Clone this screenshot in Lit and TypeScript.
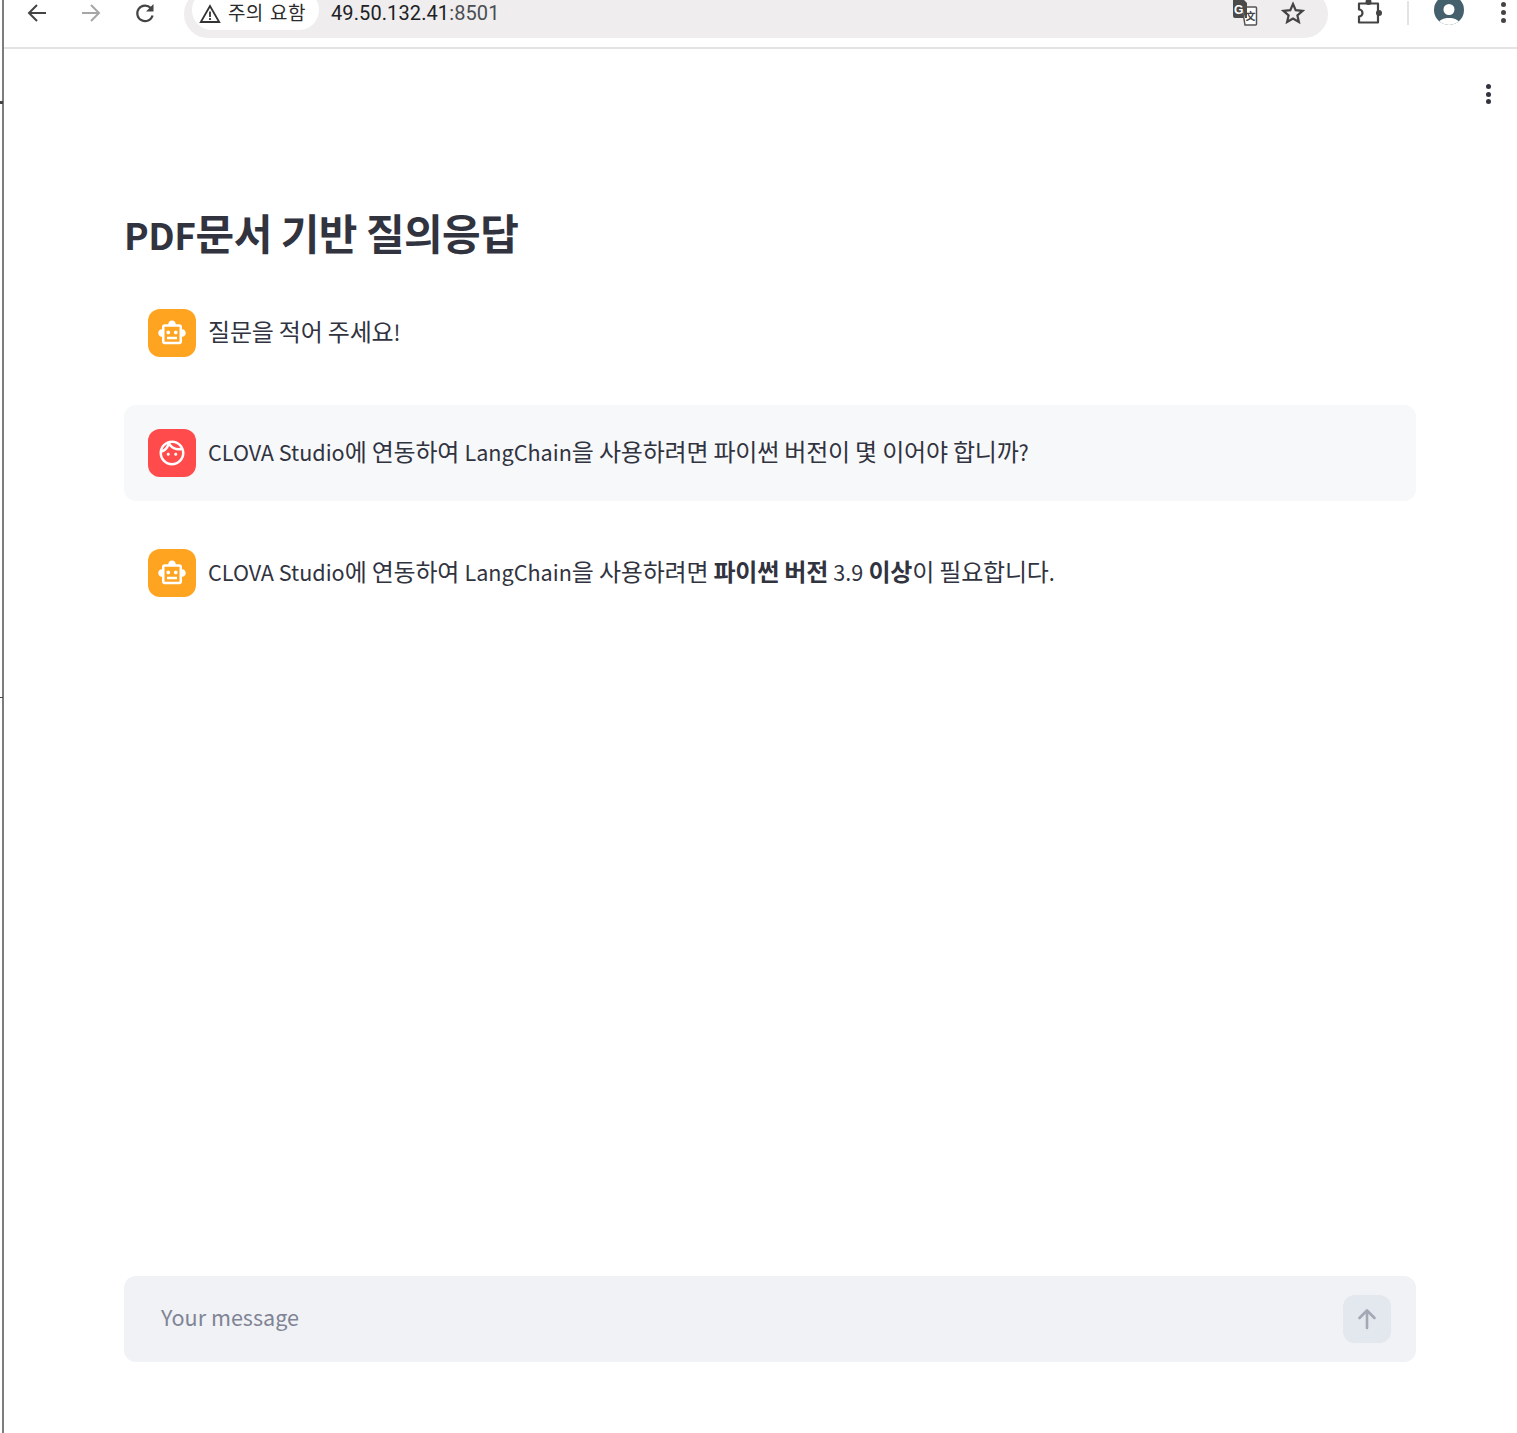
import { LitElement, html, css } from "lit";
import { customElement } from "lit/decorators.js";

const botPath = "M20 9V7c0-1.1-.9-2-2-2h-3c0-1.66-1.34-3-3-3S9 3.34 9 5H6c-1.1 0-2 .9-2 2v2c-1.66 0-3 1.34-3 3s1.34 3 3 3v4c0 1.1.9 2 2 2h12c1.1 0 2-.9 2-2v-4c1.66 0 3-1.34 3-3s-1.34-3-3-3zm-2 10H6V7h12v12zm-9-6c-.83 0-1.5-.67-1.5-1.5S8.17 10 9 10s1.5.67 1.5 1.5S9.83 13 9 13zm7.5-1.5c0 .83-.67 1.5-1.5 1.5s-1.5-.67-1.5-1.5.67-1.5 1.5-1.5 1.5.67 1.5 1.5zM8 15h8v2H8v-2z";
const facePath = "M10.25 13c0 .69-.56 1.25-1.25 1.25S7.75 13.69 7.75 13s.56-1.25 1.25-1.25 1.25.56 1.25 1.25zM15 11.75c-.69 0-1.25.56-1.25 1.25s.56 1.25 1.25 1.25 1.25-.56 1.25-1.25-.56-1.25-1.25-1.25zm7 .25c0 5.52-4.48 10-10 10S2 17.52 2 12 6.48 2 12 2s10 4.48 10 10zM10.66 4.12C12.06 6.44 14.6 8 17.5 8c.46 0 .91-.05 1.34-.12C17.44 5.56 14.9 4 12 4c-.46 0-.91.05-1.34.12zM4.42 9.47c1.71-.97 3.03-2.55 3.66-4.44C6.37 6 5.05 7.58 4.42 9.47zM20 12c0-.78-.12-1.53-.33-2.24-.7.15-1.42.24-2.17.24-3.13 0-5.92-1.44-7.76-3.69C8.69 8.87 6.6 10.85 4 11.86c.01.04 0 .09 0 .14 0 4.41 3.59 8 8 8s8-3.59 8-8z";

const icon = (d: string) => html`<svg class="av-icon" viewBox="0 0 24 24" fill="#fff"><path d=${d}></path></svg>`;

/* Latin runs are set smaller: the CJK family's Latin glyphs are larger than the reference's. */
const mixed = (text: string) =>
  text.split(/([A-Za-z0-9.!?]+(?: [A-Za-z0-9.!?]+)*)/).map((part, i) =>
    i % 2 ? html`<span class="l">${part}</span>` : part
  );

@customElement("app-root")
export class AppRoot extends LitElement {
  static styles = css`
    :host { display: block; height: 1433px; background: #fff; overflow: hidden; position: relative;
      font-family: "Noto Sans CJK KR", "Noto Sans", sans-serif; color: #31333f; }
    .frame { height: 1433px; margin-left: 2px; border-left: 2px solid #7d7d7d; display: flex; flex-direction: column; box-sizing: border-box; }
    .tick { position: absolute; left: 0; width: 3px; height: 3px; background: #444; }
    .toolbar { height: 49px; flex: none; box-sizing: border-box; border-bottom: 2px solid #e3e3e3; display: flex; align-items: flex-start; overflow: hidden; padding-left: 6px; }
    .nav { width: 54px; height: 26px; display: flex; align-items: center; justify-content: center; flex: none; }
    .pill { width: 1144px; height: 48px; margin: -10px 0 0 12px; border-radius: 24px; background: #efedee; display: flex; align-items: center; flex: none; padding-left: 8px; box-sizing: border-box; position: relative; }
    .badge { width: 127px; height: 40px; border-radius: 20px; background: #fff; display: flex; align-items: center; padding-left: 7px; box-sizing: border-box; gap: 7px; margin-top: -8px; flex: none; }
    .badge svg { position: relative; top: 4px; flex: none; }
    .badge span { font: 19px/1 "Noto Sans CJK KR", sans-serif; color: #2b2b2b; letter-spacing: .3px; word-spacing: 2px; position: relative; top: 1px; white-space: nowrap; }
    .url { font: 20px/1 Roboto, sans-serif; color: #202124; margin-left: 12px; position: relative; top: -1px; letter-spacing: .1px; }
    .url i { font-style: normal; color: #4a4d51; }
    .pill-end { margin-left: auto; display: flex; align-items: center; gap: 23px; padding-right: 23px; position: relative; top: -1px; }
    .ext { margin-left: 27px; width: 28px; height: 28px; flex: none; }
    .divider { width: 2px; height: 24px; background: #e3e3e3; margin: 1px 0 0 24px; flex: none; }
    .avatar { margin: 0 0 0 24px; width: 32px; height: 30px; flex: none; }
    .dots { margin: 2px 0 0 35px; width: 6px; height: 21px; flex: none; display: flex; flex-direction: column; justify-content: space-between; align-items: center; }
    .dots b { width: 5px; height: 5px; border-radius: 50%; background: #444; display: block; }

    .page { flex: 1; display: flex; flex-direction: column; position: relative; padding: 0 101px 0 120px; min-height: 0; }
    .menu { position: absolute; top: 35px; right: 26px; width: 6px; height: 20px; display: flex; flex-direction: column; justify-content: space-between; align-items: center; }
    .menu b { width: 5px; height: 5px; border-radius: 50%; background: #31333f; display: block; }
    h1 { margin: 153px 0 0; font-size: 42px; line-height: 60px; font-weight: 700; letter-spacing: -.55px; height: 83px; }
    h1 .l { font-size: 37px; letter-spacing: -.4px; }
    .msgs { display: flex; flex-direction: column; gap: 24px; }
    .msg { display: flex; gap: 12px; padding: 24px; border-radius: 12px; height: 96px; box-sizing: border-box; }
    .msg.user { background: #f7f8fa; }
    .av { width: 48px; height: 48px; border-radius: 12px; display: flex; align-items: center; justify-content: center; flex: none; }
    .av.bot { background: #ffa421; }
    .av.human { background: #ff4b4b; }
    .av-icon { width: 30px; height: 30px; display: block; margin-left: -1px; }
    .txt { font-size: 24px; line-height: 44px; letter-spacing: -.2px; white-space: nowrap; }
    .txt b { font-weight: 700; }
    .l { font-size: 21.6px; letter-spacing: 0; }
    .spacer { flex: 1; }
    .input { height: 86px; border-radius: 12px; background: #f0f2f6; display: flex; align-items: center; padding: 0 25px 0 37px; flex: none; margin-bottom: 71px; }
    .ph { font-size: 21.6px; color: #808495; line-height: 1; position: relative; top: -2px; }
    .send { margin-left: auto; width: 48px; height: 48px; border-radius: 12px; background: #e3e7ee; display: flex; align-items: center; justify-content: center; }
  `;

  render() {
    return html`
      <i class="tick" style="top:101px"></i>
      <i class="tick" style="top:697px;height:1px"></i>
      <div class="frame">
        <div class="toolbar">
          <div class="nav"><svg width="22" height="22" viewBox="0 0 22 22" fill="none" stroke="#444" stroke-width="2"><path d="M20 11H3M11 3l-8 8 8 8"/></svg></div>
          <div class="nav"><svg width="22" height="22" viewBox="0 0 22 22" fill="none" stroke="#a6a6a6" stroke-width="2"><path d="M2 11h17M11 3l8 8-8 8"/></svg></div>
          <div class="nav"><svg width="22" height="22" viewBox="0 0 22 22" fill="none" stroke="#444" stroke-width="2.2"><path d="M18.6 13.500A7.800 7.800 0 1 1 16.800 6"/><path d="M19.500 2v7.500H12z" fill="#444" stroke="none"/></svg></div>
          <div class="pill">
            <div class="badge">
              <svg width="22" height="20" viewBox="0 0 22 20" fill="none" stroke="#333" stroke-width="1.8"><path d="M11 2 1.800 18h18.400z"/><path d="M11 7.500v5.500M11 14v2"/></svg>
              <span>주의 요함</span>
            </div>
            <div class="url">49.50.132.41<i>:8501</i></div>
            <div class="pill-end">
              <svg width="27" height="26" viewBox="0 0 27 26">
                <path d="M2 0h11l3 3v15H4a2 2 0 0 1-2-2z" fill="#4a4a4a"/>
                <path d="M11 7h13.500a1 1 0 0 1 1 1v16a1 1 0 0 1-1 1H14z" fill="#fff" stroke="#555" stroke-width="1.500"/>
                <path d="M11 7h5v11h-2z" fill="#4a4a4a"/>
                <text x="3" y="14" font-family="Liberation Sans" font-size="12" font-weight="700" fill="#fff">G</text>
                <text x="14.500" y="20" font-family="Noto Sans CJK SC" font-size="10" font-weight="700" fill="#444">文</text>
              </svg>
              <svg width="24" height="24" viewBox="0 0 24 24" fill="none" stroke="#444" stroke-width="2.200"><path d="m12 3 2.700 6.200 6.800.700-5.100 4.500 1.500 6.600L12 17.500 6.100 21l1.500-6.600L2.500 9.900l6.800-.700z"/></svg>
            </div>
          </div>
          <svg class="ext" viewBox="0 0 28 28"><path d="M4 3.500h19v19H4v-6a3.500 3.500 0 0 0 0-7z" fill="none" stroke="#444" stroke-width="2.200" stroke-linejoin="round"/><circle cx="13.500" cy="2" r="3" fill="#444"/><circle cx="24" cy="13" r="3" fill="#444"/></svg>
          <div class="divider"></div>
          <svg class="avatar" viewBox="0 0 32 30"><defs><clipPath id="av"><circle cx="16" cy="10" r="15"/></clipPath></defs><g clip-path="url(#av)"><rect width="32" height="30" fill="#44606d"/><circle cx="16" cy="9.500" r="5.500" fill="#fff"/><path d="M3 26c2-6 8-8 13-8s11 2 13 8z" fill="#fff"/></g></svg>
          <div class="dots"><b></b><b></b><b></b></div>
        </div>
        <div class="page">
          <div class="menu"><b></b><b></b><b></b></div>
          <h1>${mixed("PDF문서 기반 질의응답")}</h1>
          <div class="msgs">
            <div class="msg"><div class="av bot">${icon(botPath)}</div><div class="txt">${mixed("질문을 적어 주세요!")}</div></div>
            <div class="msg user"><div class="av human">${icon(facePath)}</div><div class="txt">${mixed("CLOVA Studio에 연동하여 LangChain을 사용하려면 파이썬 버전이 몇 이어야 합니까?")}</div></div>
            <div class="msg"><div class="av bot">${icon(botPath)}</div><div class="txt">${mixed("CLOVA Studio에 연동하여 LangChain을 사용하려면 ")}<b>파이썬 버전</b> ${mixed("3.9")} <b>이상</b>${mixed("이 필요합니다.")}</div></div>
          </div>
          <div class="spacer"></div>
          <div class="input">
            <span class="ph">Your message</span>
            <div class="send"><svg width="26" height="26" viewBox="0 0 26 26" fill="none" stroke="#a3a8b4" stroke-width="2.600" stroke-linecap="round" stroke-linejoin="round"><path d="M13 22V5M5.500 12 13 4.500 20.500 12"/></svg></div>
          </div>
        </div>
      </div>
    `;
  }
}
